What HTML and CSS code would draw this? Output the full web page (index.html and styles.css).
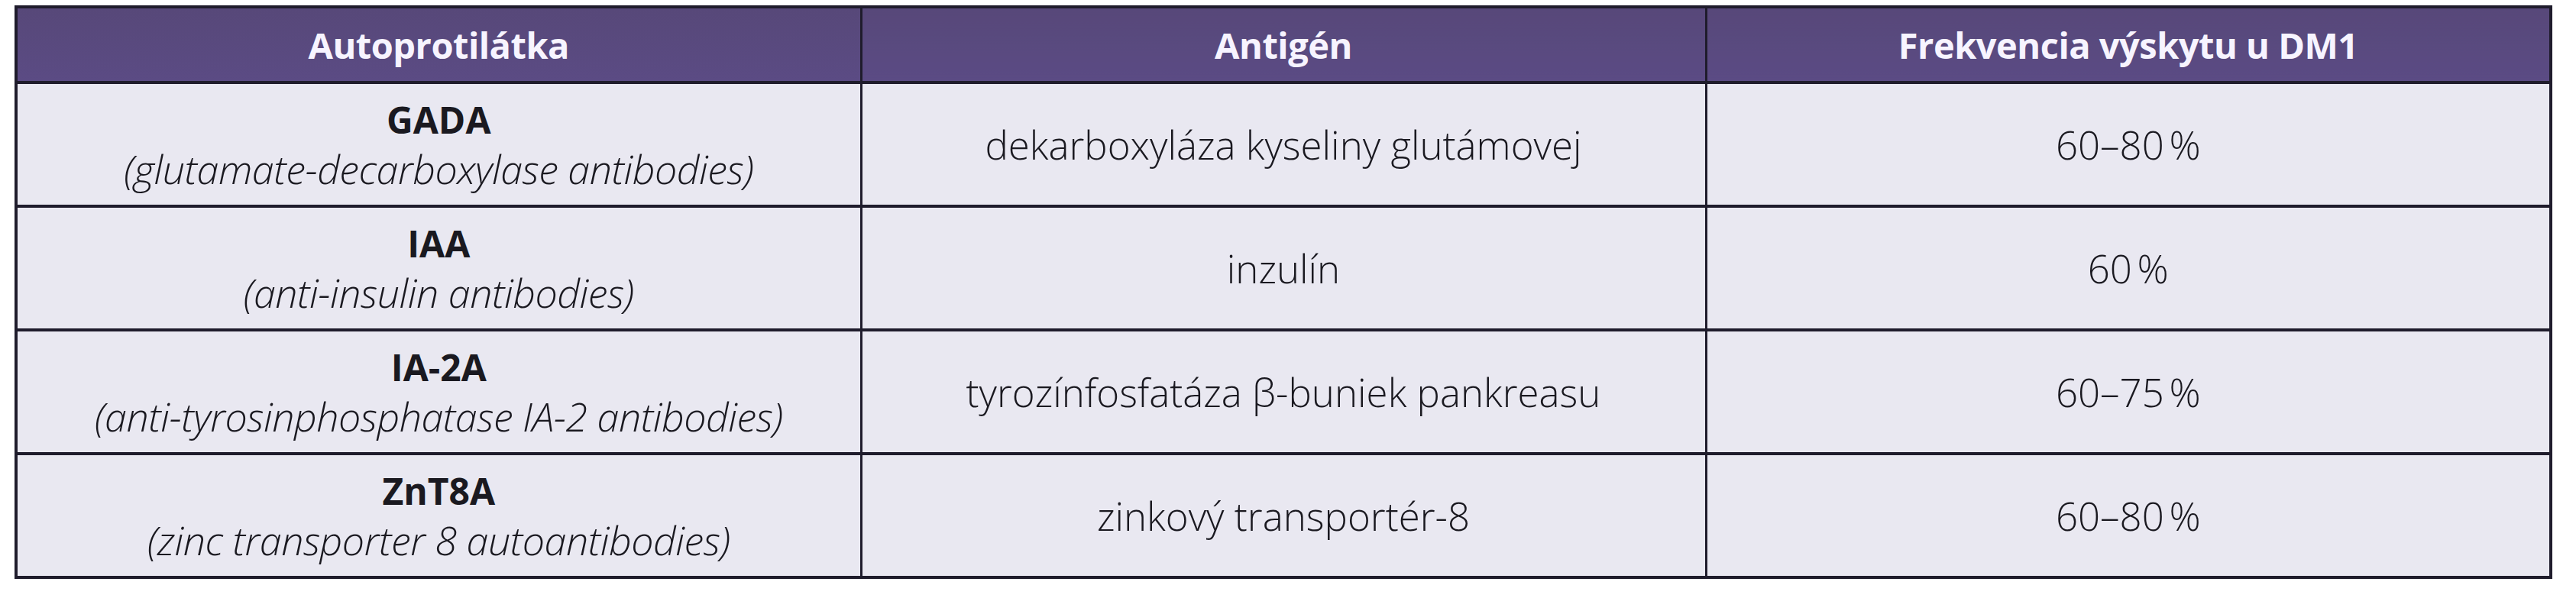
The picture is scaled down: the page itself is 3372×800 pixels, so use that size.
FILE: index.html
```html
<!DOCTYPE html>
<html lang="sk">
<head>
<meta charset="utf-8">
<title>Autoprotilátky pri DM1</title>
<link rel="stylesheet" href="styles.css">
</head>
<body>
<table class="grid">
  <colgroup><col><col><col></colgroup>
  <thead>
    <tr class="head">
      <th>Autoprotilátka</th>
      <th>Antigén</th>
      <th>Frekvencia výskytu u DM1</th>
    </tr>
  </thead>
  <tbody>
    <tr>
      <td><span class="name">GADA</span><span class="desc">(glutamate-decarboxylase antibodies)</span></td>
      <td>dekarboxyláza kyseliny glutámovej</td>
      <td>60–80&#8239;%</td>
    </tr>
    <tr>
      <td><span class="name">IAA</span><span class="desc">(anti-insulin antibodies)</span></td>
      <td>inzulín</td>
      <td>60&#8239;%</td>
    </tr>
    <tr>
      <td><span class="name">IA-2A</span><span class="desc">(anti-tyrosinphosphatase IA-2 antibodies)</span></td>
      <td>tyrozínfosfatáza β-buniek pankreasu</td>
      <td>60–75&#8239;%</td>
    </tr>
    <tr>
      <td><span class="name">ZnT8A</span><span class="desc">(zinc transporter 8 autoantibodies)</span></td>
      <td>zinkový transportér-8</td>
      <td>60–80&#8239;%</td>
    </tr>
  </tbody>
</table>
</body>
</html>
```
FILE: styles.css
```css
html, body {
  margin: 0;
  padding: 0;
  background: #ffffff;
}

body {
  padding: 7px 0 0 19px;
  font-family: "Open Sans", "Liberation Sans", sans-serif;
  color: #1a1920;
}

.grid {
  width: 3322px;
  table-layout: fixed;
  border-collapse: collapse;
  border: 4px solid #1f1c2c;
}

.grid th,
.grid td {
  padding: 0;
  text-align: center;
  vertical-align: middle;
  border-left: 3px solid #1f1c2c;
  border-right: 3px solid #1f1c2c;
  border-bottom: 4px solid #1f1c2c;
}

.head th {
  height: 95px;
  background: linear-gradient(#574879, #5b4b84);
  color: #f7f4ff;
  font-size: 47px;
  font-weight: 700;
  letter-spacing: -0.5px;
}

.grid td {
  height: 158px;
  background: #e9e8f1;
  font-size: 51px;
  font-weight: 300;
  line-height: 64px;
}

.name {
  display: block;
  font-weight: 700;
  font-size: 48px;
}

.desc {
  display: block;
  font-style: italic;
  font-weight: 300;
  font-size: 52px;
  letter-spacing: -0.5px;
}
```
